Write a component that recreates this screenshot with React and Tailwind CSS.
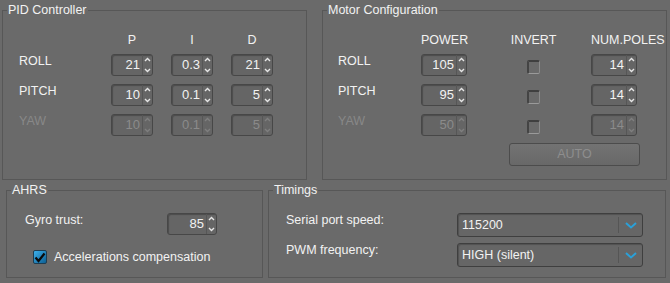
import React from 'react';

const BG = 'bg-[#6a6a6a]';

function Chevron({ up, disabled }) {
  return (
    <svg width="7" height="5" viewBox="0 0 7 5" className="block">
      <path
        d={up ? 'M1 4 L3.5 1.5 L6 4' : 'M1 1 L3.5 3.5 L6 1'}
        fill="none"
        stroke={disabled ? '#7f7f7f' : '#e6e6e6'}
        strokeWidth="1.4"
      />
    </svg>
  );
}

function Spin({ value, w = 'w-[42px]', disabled }) {
  return (
    <div className={`${w} h-[22px] flex rounded-[3px] border border-[#474747] bg-[#656565] shadow-[inset_1px_1px_1px_rgba(0,0,0,0.25)]`}>
      <div className={`flex-1 flex items-center justify-end pr-[2px] text-[13px] ${disabled ? 'text-[#8b8b8b]' : 'text-[#f2f2f2]'}`}>
        {value}
      </div>
      <div className="w-[10px] flex flex-col items-center justify-between py-[2px] border-l border-[#565656]">
        <Chevron up disabled={disabled} />
        <Chevron disabled={disabled} />
      </div>
    </div>
  );
}

function Check({ checked }) {
  if (checked) {
    return (
      <div className="w-[14px] h-[14px] rounded-[2px] border border-[#1d3d52] bg-gradient-to-br from-[#3cb0ec] to-[#0c5f93] flex items-center justify-center">
        <svg width="12" height="11" viewBox="0 0 12 11">
          <path d="M1.5 5.5 L4.5 9 L10.5 1.5" fill="none" stroke="#0a0a0a" strokeWidth="2.2" />
        </svg>
      </div>
    );
  }
  return (
    <div className="w-[13px] h-[14px] rounded-[2px] border-t-[2px] border-l-[2px] border-b border-r border-t-[#3f3f3f] border-l-[#444] border-b-[#9a9a9a] border-r-[#8a8a8a]" />
  );
}

function Group({ title, className, children }) {
  return (
    <div className={`relative border border-[#575757] ${className}`}>
      <div className={`absolute -top-[8px] left-[4px] px-[1px] ${BG} leading-[15px] text-[12.5px] text-[#f2f2f2]`}>
        {title}
      </div>
      {children}
    </div>
  );
}

function Combo({ value }) {
  return (
    <div className="w-[186px] h-[24px] flex items-center rounded-[3px] border border-[#3f3f3f] bg-[#666] shadow-[inset_1px_1px_1px_rgba(0,0,0,0.2)]">
      <div className="flex-1 pl-[4px] text-[12.5px] text-[#f2f2f2]">{value}</div>
      <div className="w-px h-[16px] bg-[#555]" />
      <div className="w-[23px] flex justify-center">
        <svg width="12" height="7" viewBox="0 0 12 7">
          <path d="M1 1 L6 5.5 L11 1" fill="none" stroke="#2aa0d8" strokeWidth="2" />
        </svg>
      </div>
    </div>
  );
}

export default function App() {
  const pid = [
    { name: 'ROLL', v: ['21', '0.3', '21'] },
    { name: 'PITCH', v: ['10', '0.1', '5'] },
    { name: 'YAW', v: ['10', '0.1', '5'], off: true },
  ];
  const motor = [
    { name: 'ROLL', p: '105', n: '14' },
    { name: 'PITCH', p: '95', n: '14' },
    { name: 'YAW', p: '50', n: '14', off: true },
  ];

  return (
    <div className={`w-[670px] h-[283px] ${BG} overflow-hidden text-[12.5px] text-[#f2f2f2] font-['Liberation_Sans',Arial,sans-serif]`}>
      <div className="flex pt-[10px] pl-[2px]">
        <Group title="PID Controller" className="w-[305px] h-[170px]">
          <div className="pl-[16px] pt-[22px]">
            <div className="flex h-[15px] leading-[15px]">
              <div className="w-[92px]" />
              <div className="w-[42px] text-center">P</div>
              <div className="w-[18px]" />
              <div className="w-[42px] text-center">I</div>
              <div className="w-[18px]" />
              <div className="w-[42px] text-center">D</div>
            </div>
            <div className="flex flex-col gap-[8px] mt-[6px]">
              {pid.map((r) => (
                <div key={r.name} className="flex items-start gap-[18px]">
                  <div className={`w-[74px] leading-[15px] ${r.off ? 'text-[#888]' : ''}`}>{r.name}</div>
                  {r.v.map((x, i) => (
                    <Spin key={i} value={x} disabled={r.off} />
                  ))}
                </div>
              ))}
            </div>
          </div>
        </Group>

        <Group title="Motor Configuration" className="ml-[15px] w-[345px] h-[170px]">
          <div className="pl-[15px] pt-[22px]">
            <div className="flex h-[15px] leading-[15px]">
              <div className="w-[83px]" />
              <div className="w-[46px] text-center">POWER</div>
              <div className="w-[124px] pl-[9px] text-center">INVERT</div>
              <div className="w-[54px] text-center">NUM.POLES</div>
            </div>
            <div className="flex flex-col gap-[8px] mt-[6px]">
              {motor.map((r) => (
                <div key={r.name} className="flex items-start">
                  <div className={`w-[83px] leading-[15px] ${r.off ? 'text-[#888]' : ''}`}>{r.name}</div>
                  <Spin value={r.p} w="w-[46px]" disabled={r.off} />
                  <div className="w-[124px] pl-[9px] h-[22px] flex items-center justify-center pt-[3px]">
                    <Check />
                  </div>
                  <Spin value={r.n} w="w-[46px]" disabled={r.off} />
                </div>
              ))}
            </div>
            <div className="ml-[171px] mt-[7px] w-[131px] h-[23px] rounded-[3px] border border-[#4c4c4c] bg-gradient-to-b from-[#737373] to-[#686868] flex items-center justify-center text-[#8e8e8e]">
              AUTO
            </div>
          </div>
        </Group>
      </div>

      <div className="flex mt-[10px] pl-[6px]">
        <Group title="AHRS" className="w-[257px] h-[88px]">
          <div className="pl-[18px] pt-[22px] flex items-start">
            <div className="w-[142px] leading-[15px]">Gyro trust:</div>
            <Spin value="85" w="w-[50px]" />
          </div>
          <div className="flex items-center gap-[7px] pl-[26px] mt-[13px]">
            <Check checked />
            <span>Accelerations compensation</span>
          </div>
        </Group>

        <Group title="Timings" className="ml-[5px] w-[398px] h-[88px]">
          <div className="pl-[17px] pt-[22px] flex flex-col gap-[6px]">
            <div className="flex items-start">
              <div className="w-[171px] leading-[15px]">Serial port speed:</div>
              <Combo value="115200" />
            </div>
            <div className="flex items-start">
              <div className="w-[171px] leading-[15px]">PWM frequency:</div>
              <Combo value="HIGH (silent)" />
            </div>
          </div>
        </Group>
      </div>
    </div>
  );
}
